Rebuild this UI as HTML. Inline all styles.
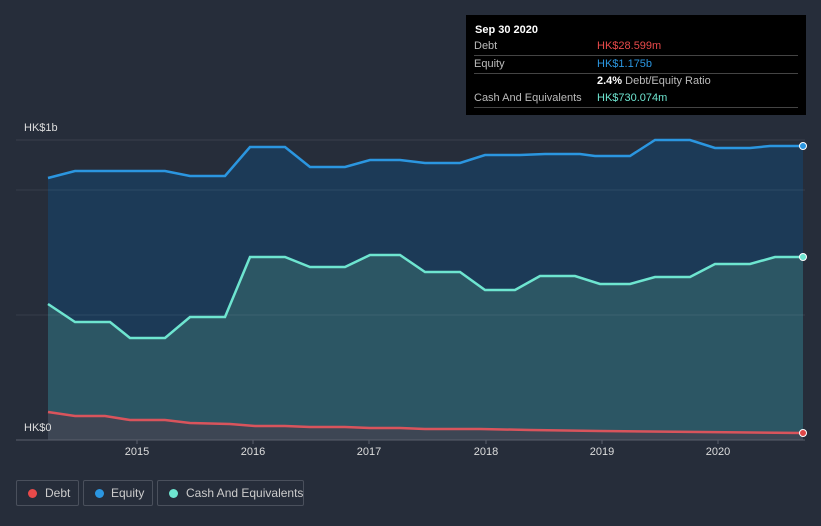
<!DOCTYPE html>
<html><head><style>
html,body{margin:0;width:821px;height:526px;overflow:hidden}
body{background:#262d3a;font-family:"Liberation Sans",sans-serif;position:relative}
.tt{position:absolute;left:466px;top:15px;width:340px;height:100px;background:#000;color:#bbb;font-size:11px}
.tt .r{position:absolute;left:8px;right:8px;border-bottom:1px solid #444;height:17px;line-height:17px}
.leg{position:absolute;top:480px;height:26px;border:1px solid #4a505c;border-radius:2px;color:#ccc;font-size:12px;line-height:24px;box-sizing:border-box;padding-left:27px;white-space:nowrap}
.leg i{position:absolute;left:11px;top:8px;width:9px;height:9px;border-radius:50%}
.yr{position:absolute;top:446px;color:#ddd;font-size:11px;width:40px;text-align:center}
</style></head><body>
<svg width="821" height="526" style="position:absolute;left:0;top:0">
<line x1="16" y1="140" x2="805" y2="140" stroke="#3a404c"/>
<polygon fill="#1c3a57" points="48,178 75,171 130,171 165,171 190,176 225,176 250,147 285,147 310,167 345,167 370,160 400,160 425,163 460,163 485,155 520,155 545,154 580,154 595,156 630,156 655,140 690,140 715,148 750,148 770,146 803,146 803,440 48,440"/>
<polygon fill="#2c5664" points="48,304 75,322 110,322 130,338 165,338 190,317 225,317 250,257 285,257 310,267 345,267 370,255 400,255 425,272 460,272 485,290 515,290 540,276 575,276 600,284 630,284 655,277 690,277 715,264 750,264 775,257 803,257 803,440 48,440"/>
<polygon fill="#3d4654" points="48,412 75,416 105,416 130,420 165,420 190,423 230,424 255,426 285,426 310,427 345,427 370,428 400,428 425,429 480,429 530,430 600,431 700,432 803,433 803,440 48,440"/>
<line x1="16" y1="190" x2="805" y2="190" stroke="#ffffff" stroke-opacity="0.08"/>
<line x1="16" y1="315" x2="805" y2="315" stroke="#ffffff" stroke-opacity="0.08"/>
<polyline fill="none" stroke="#2b96e0" stroke-width="2.5" points="48,178 75,171 130,171 165,171 190,176 225,176 250,147 285,147 310,167 345,167 370,160 400,160 425,163 460,163 485,155 520,155 545,154 580,154 595,156 630,156 655,140 690,140 715,148 750,148 770,146 803,146"/>
<polyline fill="none" stroke="#6ee5d0" stroke-width="2.5" points="48,304 75,322 110,322 130,338 165,338 190,317 225,317 250,257 285,257 310,267 345,267 370,255 400,255 425,272 460,272 485,290 515,290 540,276 575,276 600,284 630,284 655,277 690,277 715,264 750,264 775,257 803,257"/>
<polyline fill="none" stroke="#d9545c" stroke-width="2.5" points="48,412 75,416 105,416 130,420 165,420 190,423 230,424 255,426 285,426 310,427 345,427 370,428 400,428 425,429 480,429 530,430 600,431 700,432 803,433"/>
<line x1="16" y1="440" x2="805" y2="440" stroke="#5a606c"/>
<g stroke="#5a606c"><line x1="137" y1="440" x2="137" y2="444"/><line x1="253" y1="440" x2="253" y2="444"/><line x1="369" y1="440" x2="369" y2="444"/><line x1="486" y1="440" x2="486" y2="444"/><line x1="602" y1="440" x2="602" y2="444"/><line x1="718" y1="440" x2="718" y2="444"/></g>
<circle cx="803" cy="146" r="3.5" fill="#2b96e0" stroke="#fff" stroke-width="1"/>
<circle cx="803" cy="257" r="3.5" fill="#6ee5d0" stroke="#fff" stroke-width="1"/>
<circle cx="803" cy="433" r="3.5" fill="#e04848" stroke="#fff" stroke-width="1"/>
</svg>
<div style="position:absolute;left:24px;top:122px;color:#ddd;font-size:11px">HK$1b</div>
<div style="position:absolute;left:24px;top:422px;color:#ddd;font-size:11px">HK$0</div>
<div class="yr" style="left:117px">2015</div><div class="yr" style="left:233px">2016</div><div class="yr" style="left:349px">2017</div><div class="yr" style="left:466px">2018</div><div class="yr" style="left:582px">2019</div><div class="yr" style="left:698px">2020</div>
<div class="tt">
<div style="position:absolute;left:9px;top:9px;color:#fff;font-weight:bold;font-size:11px">Sep 30 2020</div>
<div class="r" style="top:23px">Debt<span style="position:absolute;left:123px;color:#e84a4a">HK$28.599m</span></div>
<div class="r" style="top:41px">Equity<span style="position:absolute;left:123px;color:#2b96e0">HK$1.175b</span></div>
<div class="r" style="top:58px;border:none"><span style="position:absolute;left:123px"><b style="color:#fff">2.4%</b> Debt/Equity Ratio</span></div>
<div class="r" style="top:75px">Cash And Equivalents<span style="position:absolute;left:123px;color:#6ee5d0">HK$730.074m</span></div>
</div>
<div class="leg" style="left:16px;width:63px;padding-left:28px"><i style="background:#e84a4a"></i>Debt</div>
<div class="leg" style="left:83px;width:70px"><i style="background:#2b96e0"></i>Equity</div>
<div class="leg" style="left:157px;width:147px;padding-left:28px"><i style="background:#6ee5d0"></i>Cash And Equivalents</div>
</body></html>
